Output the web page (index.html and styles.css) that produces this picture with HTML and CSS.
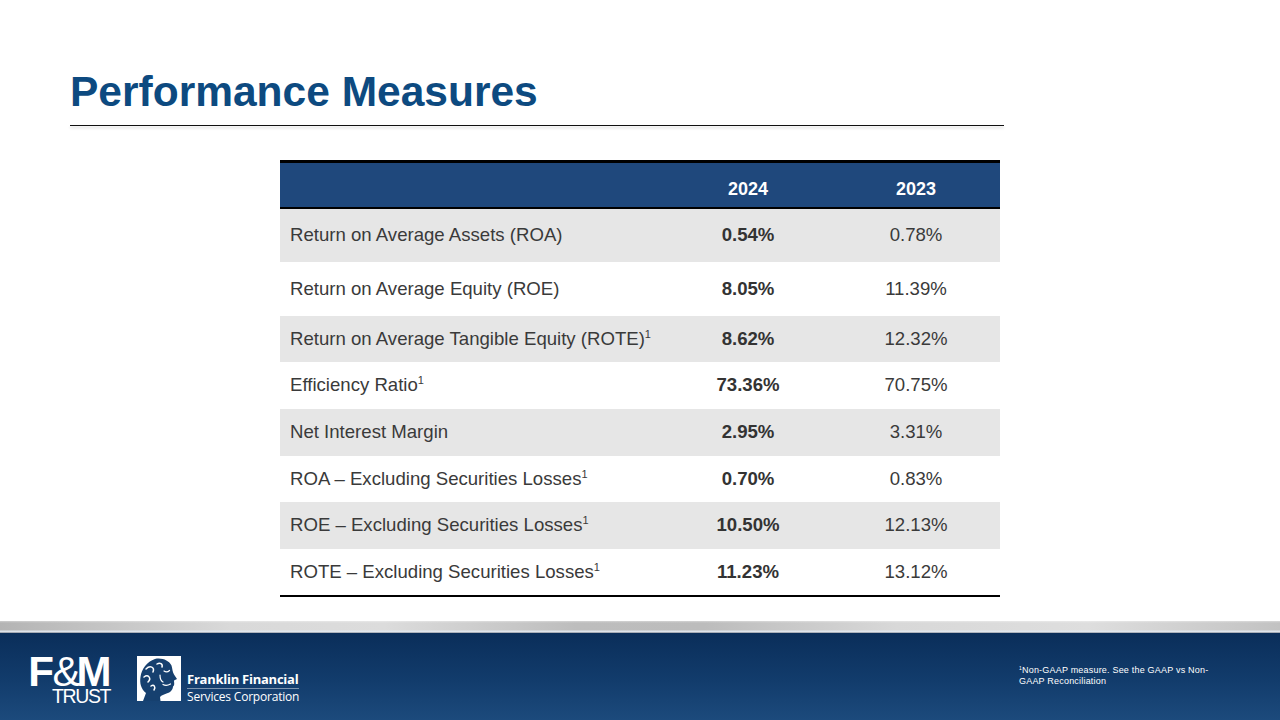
FILE: index.html
```html
<!DOCTYPE html>
<html lang="en">
<head>
<meta charset="utf-8">
<title>Performance Measures</title>
<link rel="stylesheet" href="styles.css">
</head>
<body>
<div class="slide">
  <header class="title-area">
    <h1 class="title">Performance Measures</h1>
    <div class="title-rule"></div>
  </header>

  <main class="content">
    <table class="measures">
      <thead>
        <tr>
          <th class="label"></th>
          <th>2024</th>
          <th>2023</th>
        </tr>
      </thead>
      <tbody>
        <tr class="shade tall">
          <td class="label">Return on Average Assets (ROA)</td>
          <td class="cur">0.54%</td>
          <td>0.78%</td>
        </tr>
        <tr class="tall2">
          <td class="label">Return on Average Equity (ROE)</td>
          <td class="cur">8.05%</td>
          <td>11.39%</td>
        </tr>
        <tr class="shade">
          <td class="label">Return on Average Tangible Equity (ROTE)<sup>1</sup></td>
          <td class="cur">8.62%</td>
          <td>12.32%</td>
        </tr>
        <tr class="mid">
          <td class="label">Efficiency Ratio<sup>1</sup></td>
          <td class="cur">73.36%</td>
          <td>70.75%</td>
        </tr>
        <tr class="shade mid">
          <td class="label">Net Interest Margin</td>
          <td class="cur">2.95%</td>
          <td>3.31%</td>
        </tr>
        <tr>
          <td class="label">ROA – Excluding Securities Losses<sup>1</sup></td>
          <td class="cur">0.70%</td>
          <td>0.83%</td>
        </tr>
        <tr class="shade mid">
          <td class="label">ROE – Excluding Securities Losses<sup>1</sup></td>
          <td class="cur">10.50%</td>
          <td>12.13%</td>
        </tr>
        <tr>
          <td class="label">ROTE – Excluding Securities Losses<sup>1</sup></td>
          <td class="cur">11.23%</td>
          <td>13.12%</td>
        </tr>
      </tbody>
    </table>
  </main>

  <footer class="footer">
    <div class="footer-band"></div>
    <div class="footer-main">
      <div class="brands">
        <div class="fm-logo">
          <span class="fm-mark">F<span class="amp">&amp;</span>M</span>
          <span class="fm-trust">TRUST</span>
        </div>
        <div class="ffsc-logo">
          <svg class="ffsc-icon" viewBox="0 0 44 45" width="44" height="45" aria-hidden="true">
            <rect x="0" y="0" width="44" height="45" fill="#ffffff"/>
            <path d="M6 45 L9 37 C4 33 2.5 27 3.5 21 C4.5 13 10 5.5 18 3 C25 1.5 32 4.5 34.5 9.5 C35.5 13 35.5 16 37 18.5 L40 23 L37 24.5 C37 27 38 29 36 30.5 C36 33.5 33.5 36.5 29.5 37.5 C27 38.5 24.5 39 23 41 L23.5 45 Z" fill="#16406f"/>
            <path d="M9 13 C13 9 18 11 16 16 M7 21 C11 18 15 22 11 26 M14 30 C17 28 19 31 17 34 M20 8 C23 6 26 8 25 11" stroke="#ffffff" stroke-width="1.5" fill="none" stroke-linecap="round"/>
            <path d="M27 15 C29 16.5 31 16 32.5 14.5 M26 28.5 C28.5 30 31 29.5 33.5 28 M23 19 C23 22.5 24 25 26 26" stroke="#ffffff" stroke-width="1.2" fill="none" stroke-linecap="round"/>
          </svg>
          <div class="ffsc-text">
            <span class="ffsc-name">Franklin Financial</span>
            <span class="ffsc-sub">Services Corporation</span>
          </div>
        </div>
      </div>
      <p class="footnote"><sup>1</sup>Non-GAAP measure. See the GAAP vs Non-<br>GAAP Reconciliation</p>
    </div>
  </footer>
</div>
</body>
</html>
```

FILE: styles.css
```css
html, body {
  margin: 0;
  padding: 0;
  background: #ffffff;
}

.slide {
  width: 1280px;
  height: 720px;
  overflow: hidden;
  display: flex;
  flex-direction: column;
  font-family: "Liberation Sans", Arial, sans-serif;
  background: #ffffff;
}

/* ---------- title ---------- */
.title-area {
  padding: 71px 0 0 70px;
}

.title {
  margin: 0;
  font-size: 42.5px;
  line-height: 1;
  font-weight: 700;
  color: #0d4a80;
}

.title-rule {
  width: 934px;
  height: 1px;
  margin-top: 11px;
  background: #111111;
  box-shadow: 0 2px 3px rgba(0, 0, 0, 0.2);
}

/* ---------- table ---------- */
.content {
  flex: 1;
  padding: 34px 0 0 280px;
}

.measures {
  width: 720px;
  border-collapse: separate;
  border-spacing: 0;
  border-top: 3px solid #000000;
  border-bottom: 2px solid #000000;
  table-layout: fixed;
  color: #3a3a3a;
  font-size: 18.6px;
}

.measures th,
.measures td {
  padding: 0;
  text-align: center;
  white-space: nowrap;
}

.measures th.label,
.measures td.label {
  width: 384px;
  text-align: left;
  padding-left: 10px;
  box-sizing: border-box;
}

.measures thead tr {
  height: 46px;
}

.measures th {
  background: #1f487c;
  color: #ffffff;
  font-weight: 700;
  font-size: 18px;
  vertical-align: bottom;
  padding-bottom: 7px;
  border-bottom: 2px solid #000000;
}

.measures tbody tr {
  height: 46px;
}

.measures tbody tr.mid {
  height: 47px;
}

.measures tbody tr.tall {
  height: 53px;
}

.measures tbody tr.tall2 {
  height: 54px;
}

.measures tbody tr.shade td {
  background: #e6e6e6;
}

.measures td.cur {
  font-weight: 700;
  color: #333333;
}

.measures sup {
  font-size: 11px;
  line-height: 0;
  vertical-align: 7px;
}

/* ---------- footer ---------- */
.footer {
  height: 99px;
  display: flex;
  flex-direction: column;
}

.footer-band {
  height: 12px;
  background:
    linear-gradient(to bottom, rgba(255,255,255,0.35) 0, rgba(255,255,255,0) 2px, rgba(255,255,255,0) 9px, rgba(225,232,240,0.9) 10px, rgba(225,232,240,0.9) 11px, rgba(60,70,90,0.6) 12px),
    linear-gradient(to right, #b4b4b4 0%, #d9d9d9 18%, #dcdcdc 30%, #bdbdbd 45%, #bcbcbc 55%, #d8d8d8 70%, #dedede 85%, #c2c2c2 100%);
}

.footer-main {
  flex: 1;
  display: flex;
  justify-content: space-between;
  align-items: flex-start;
  padding: 23px 66px 0 28px;
  background: linear-gradient(to bottom, #0a2e5a 0%, #123c6c 55%, #1c4a7c 100%);
}

.brands {
  display: flex;
  align-items: flex-start;
  gap: 27px;
}

.fm-logo {
  display: flex;
  flex-direction: column;
  align-items: flex-end;
  width: 82px;
  color: #ffffff;
}

.fm-mark {
  display: block;
  font-size: 42px;
  font-weight: 700;
  line-height: 31px;
  height: 31px;
  letter-spacing: -1.5px;
  margin-right: 0;
}

.fm-mark .amp {
  font-weight: 400;
  letter-spacing: -4px;
}

.fm-trust {
  display: block;
  font-size: 19.5px;
  line-height: 16px;
  letter-spacing: -1.4px;
  margin-top: 1px;
  margin-right: 0;
}

.ffsc-logo {
  display: flex;
  align-items: flex-start;
  gap: 6px;
}

.ffsc-icon {
  display: block;
}

.ffsc-text {
  display: flex;
  flex-direction: column;
  margin-top: 15px;
  color: #ffffff;
  font-family: "Open Sans", "Noto Sans", sans-serif;
}

.ffsc-name {
  font-size: 13px;
  font-weight: 700;
  line-height: 16px;
  letter-spacing: -0.25px;
  padding-bottom: 1px;
  border-bottom: 1px solid rgba(255, 255, 255, 0.45);
}

.ffsc-sub {
  font-size: 12px;
  line-height: 15px;
  letter-spacing: -0.2px;
}

.footnote {
  margin: 9px 0 0 0;
  width: 195px;
  font-size: 9px;
  line-height: 11px;
  color: #ffffff;
  letter-spacing: 0.2px;
}

.footnote sup {
  font-size: 5px;
  vertical-align: 3px;
  line-height: 0;
}
```
